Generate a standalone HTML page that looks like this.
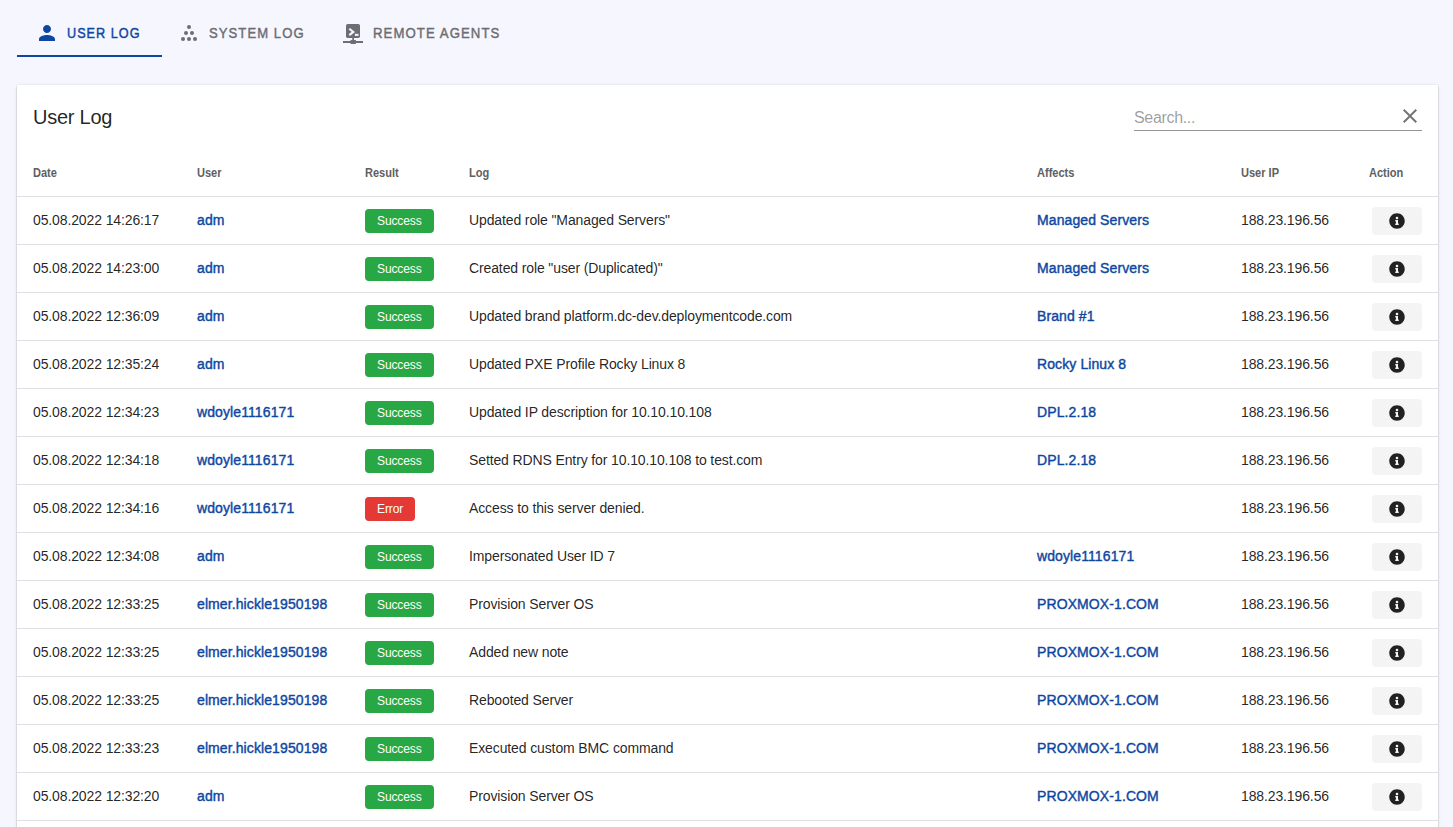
<!DOCTYPE html>
<html><head><meta charset="utf-8"><title>User Log</title>
<style>
html,body{margin:0;padding:0;}
body{width:1453px;height:827px;overflow:hidden;background:#f6f7fe;font-family:"Liberation Sans",sans-serif;color:rgba(0,0,0,0.87);position:relative;}
.tab{position:absolute;top:0;height:57px;}
.tab .t{position:absolute;top:24px;font-size:15px;font-weight:normal;-webkit-text-stroke:0.45px currentColor;letter-spacing:1.2px;line-height:17px;white-space:nowrap;transform-origin:0 0;}
.tab svg{position:absolute;}
.t1 .t{color:#0d47a1;}
.t2 .t,.t3 .t{color:#6d6d72;}
.ind{position:absolute;left:17px;top:55px;width:145px;height:2px;background:#0d47a1;}
.card{position:absolute;left:17px;top:85px;width:1421px;height:800px;background:#fff;
box-shadow:0 2px 2px rgba(0,0,0,0.2),0 0 1px rgba(0,0,0,0.2),0 1px 5px rgba(0,0,0,0.05);}
.title{position:absolute;left:16px;top:20px;font-size:20px;letter-spacing:-0.25px;line-height:24px;white-space:nowrap;}
.search{position:absolute;left:1117px;top:13px;width:288px;height:32px;border-bottom:1px solid rgba(0,0,0,0.42);}
.search .ph{position:absolute;left:0;top:10px;font-size:16px;letter-spacing:-0.33px;line-height:19px;color:rgba(0,0,0,0.40);}
.search svg{position:absolute;left:264px;top:6px;}
.hdr{position:absolute;left:0;top:64px;width:1421px;height:47px;border-bottom:1px solid #e0e0e0;}
.hdr span{position:absolute;top:17px;transform-origin:0 0;transform:scaleX(0.92);font-size:12px;font-weight:bold;line-height:14px;color:#606060;white-space:nowrap;}
.row{position:absolute;left:0;width:1421px;height:47px;border-bottom:1px solid #e0e0e0;}
.c{position:absolute;top:15px;font-size:14px;letter-spacing:-0.12px;line-height:16px;white-space:nowrap;}
.lk{color:#0d47a1;-webkit-text-stroke:0.4px currentColor;letter-spacing:0.1px;}
.date{left:16px;} .user{left:180px;} .res{left:348px;top:12px;} .log{left:452px;} .aff{left:1020px;} .ip{left:1224px;}
.badge{display:inline-block;height:24px;line-height:24px;font-size:12px;color:#fff;border-radius:4px;padding:0 12px;}
.ok{background:#28a745;} .err{background:#e53935;}
.act{position:absolute;left:1355px;top:10px;width:50px;height:28px;background:#f4f4f4;border-radius:4px;}
.act svg{position:absolute;left:17px;top:6px;}
</style></head><body>
<div class="tab t1">
<svg style="left:35px;top:21px" width="24" height="24" viewBox="0 0 24 24"><path fill="#0d47a1" d="M12 12c2.21 0 4-1.79 4-4s-1.79-4-4-4-4 1.79-4 4 1.79 4 4 4zm0 2c-2.67 0-8 1.34-8 4v2h16v-2c0-2.66-5.33-4-8-4z"/></svg>
<span class="t" style="left:67px;transform:scaleX(0.844)">USER LOG</span>
</div>
<div class="ind"></div>
<div class="tab t2">
<svg style="left:175px;top:20px" width="24" height="24" viewBox="0 0 24 24" fill="#6d6d72">
<circle cx="14" cy="7" r="2"/><circle cx="11" cy="13" r="2"/><circle cx="17" cy="13" r="2"/><circle cx="8" cy="19" r="2"/><circle cx="14" cy="19" r="2"/><circle cx="20" cy="19" r="2"/></svg>
<span class="t" style="left:209px;transform:scaleX(0.873)">SYSTEM LOG</span>
</div>
<div class="tab t3">
<svg style="left:340px;top:20px" width="26" height="26" viewBox="0 0 26 26">
<g fill="#6d6d72">
<rect x="6" y="4" width="14" height="14" rx="1.8"/>
<rect x="12.3" y="17.5" width="1.7" height="3"/>
<rect x="3" y="21" width="20" height="2"/>
<rect x="10.2" y="20" width="6" height="4" rx="1.2"/>
</g>
<path d="M9.3 8.7 L13.3 11.9 L9.3 15.1" fill="none" stroke="#f6f7fe" stroke-width="2.1" stroke-linejoin="miter"/>
<rect x="14.9" y="13.8" width="3.6" height="2.1" fill="#f6f7fe"/>
</svg>
<span class="t" style="left:373px;transform:scaleX(0.88)">REMOTE AGENTS</span>
</div>
<div class="card">
<div class="title">User Log</div>
<div class="search"><span class="ph">Search...</span>
<svg width="24" height="24" viewBox="0 0 24 24"><path fill="rgba(0,0,0,0.54)" d="M19 6.41 17.59 5 12 10.59 6.41 5 5 6.41 10.59 12 5 17.59 6.41 19 12 13.41 17.59 19 19 17.59 13.41 12z"/></svg>
</div>
<div class="hdr"><span style="left:16px">Date</span><span style="left:180px">User</span><span style="left:348px">Result</span><span style="left:452px">Log</span><span style="left:1020px">Affects</span><span style="left:1224px">User IP</span><span style="left:1352px">Action</span></div>
<div class="row" style="top:112px">
<span class="c date">05.08.2022 14:26:17</span><span class="c user lk">adm</span><span class="c res"><span class="badge ok">Success</span></span><span class="c log">Updated role &quot;Managed Servers&quot;</span><span class="c aff lk">Managed Servers</span><span class="c ip">188.23.196.56</span><span class="act"><svg class="ic" viewBox="0 0 512 512" width="16" height="16"><path fill="#212121" d="M256 8C119.043 8 8 119.083 8 256c0 136.997 111.043 248 248 248s248-111.003 248-248C504 119.083 392.957 8 256 8zm0 110c23.196 0 42 18.804 42 42s-18.804 42-42 42-42-18.804-42-42 18.804-42 42-42zm56 254c0 6.627-5.373 12-12 12h-88c-6.627 0-12-5.373-12-12v-24c0-6.627 5.373-12 12-12h12v-64h-12c-6.627 0-12-5.373-12-12v-24c0-6.627 5.373-12 12-12h64c6.627 0 12 5.373 12 12v100h12c6.627 0 12 5.373 12 12v24z"/></svg></span>
</div>
<div class="row" style="top:160px">
<span class="c date">05.08.2022 14:23:00</span><span class="c user lk">adm</span><span class="c res"><span class="badge ok">Success</span></span><span class="c log">Created role &quot;user (Duplicated)&quot;</span><span class="c aff lk">Managed Servers</span><span class="c ip">188.23.196.56</span><span class="act"><svg class="ic" viewBox="0 0 512 512" width="16" height="16"><path fill="#212121" d="M256 8C119.043 8 8 119.083 8 256c0 136.997 111.043 248 248 248s248-111.003 248-248C504 119.083 392.957 8 256 8zm0 110c23.196 0 42 18.804 42 42s-18.804 42-42 42-42-18.804-42-42 18.804-42 42-42zm56 254c0 6.627-5.373 12-12 12h-88c-6.627 0-12-5.373-12-12v-24c0-6.627 5.373-12 12-12h12v-64h-12c-6.627 0-12-5.373-12-12v-24c0-6.627 5.373-12 12-12h64c6.627 0 12 5.373 12 12v100h12c6.627 0 12 5.373 12 12v24z"/></svg></span>
</div>
<div class="row" style="top:208px">
<span class="c date">05.08.2022 12:36:09</span><span class="c user lk">adm</span><span class="c res"><span class="badge ok">Success</span></span><span class="c log">Updated brand platform.dc-dev.deploymentcode.com</span><span class="c aff lk">Brand #1</span><span class="c ip">188.23.196.56</span><span class="act"><svg class="ic" viewBox="0 0 512 512" width="16" height="16"><path fill="#212121" d="M256 8C119.043 8 8 119.083 8 256c0 136.997 111.043 248 248 248s248-111.003 248-248C504 119.083 392.957 8 256 8zm0 110c23.196 0 42 18.804 42 42s-18.804 42-42 42-42-18.804-42-42 18.804-42 42-42zm56 254c0 6.627-5.373 12-12 12h-88c-6.627 0-12-5.373-12-12v-24c0-6.627 5.373-12 12-12h12v-64h-12c-6.627 0-12-5.373-12-12v-24c0-6.627 5.373-12 12-12h64c6.627 0 12 5.373 12 12v100h12c6.627 0 12 5.373 12 12v24z"/></svg></span>
</div>
<div class="row" style="top:256px">
<span class="c date">05.08.2022 12:35:24</span><span class="c user lk">adm</span><span class="c res"><span class="badge ok">Success</span></span><span class="c log">Updated PXE Profile Rocky Linux 8</span><span class="c aff lk">Rocky Linux 8</span><span class="c ip">188.23.196.56</span><span class="act"><svg class="ic" viewBox="0 0 512 512" width="16" height="16"><path fill="#212121" d="M256 8C119.043 8 8 119.083 8 256c0 136.997 111.043 248 248 248s248-111.003 248-248C504 119.083 392.957 8 256 8zm0 110c23.196 0 42 18.804 42 42s-18.804 42-42 42-42-18.804-42-42 18.804-42 42-42zm56 254c0 6.627-5.373 12-12 12h-88c-6.627 0-12-5.373-12-12v-24c0-6.627 5.373-12 12-12h12v-64h-12c-6.627 0-12-5.373-12-12v-24c0-6.627 5.373-12 12-12h64c6.627 0 12 5.373 12 12v100h12c6.627 0 12 5.373 12 12v24z"/></svg></span>
</div>
<div class="row" style="top:304px">
<span class="c date">05.08.2022 12:34:23</span><span class="c user lk">wdoyle1116171</span><span class="c res"><span class="badge ok">Success</span></span><span class="c log">Updated IP description for 10.10.10.108</span><span class="c aff lk">DPL.2.18</span><span class="c ip">188.23.196.56</span><span class="act"><svg class="ic" viewBox="0 0 512 512" width="16" height="16"><path fill="#212121" d="M256 8C119.043 8 8 119.083 8 256c0 136.997 111.043 248 248 248s248-111.003 248-248C504 119.083 392.957 8 256 8zm0 110c23.196 0 42 18.804 42 42s-18.804 42-42 42-42-18.804-42-42 18.804-42 42-42zm56 254c0 6.627-5.373 12-12 12h-88c-6.627 0-12-5.373-12-12v-24c0-6.627 5.373-12 12-12h12v-64h-12c-6.627 0-12-5.373-12-12v-24c0-6.627 5.373-12 12-12h64c6.627 0 12 5.373 12 12v100h12c6.627 0 12 5.373 12 12v24z"/></svg></span>
</div>
<div class="row" style="top:352px">
<span class="c date">05.08.2022 12:34:18</span><span class="c user lk">wdoyle1116171</span><span class="c res"><span class="badge ok">Success</span></span><span class="c log">Setted RDNS Entry for 10.10.10.108 to test.com</span><span class="c aff lk">DPL.2.18</span><span class="c ip">188.23.196.56</span><span class="act"><svg class="ic" viewBox="0 0 512 512" width="16" height="16"><path fill="#212121" d="M256 8C119.043 8 8 119.083 8 256c0 136.997 111.043 248 248 248s248-111.003 248-248C504 119.083 392.957 8 256 8zm0 110c23.196 0 42 18.804 42 42s-18.804 42-42 42-42-18.804-42-42 18.804-42 42-42zm56 254c0 6.627-5.373 12-12 12h-88c-6.627 0-12-5.373-12-12v-24c0-6.627 5.373-12 12-12h12v-64h-12c-6.627 0-12-5.373-12-12v-24c0-6.627 5.373-12 12-12h64c6.627 0 12 5.373 12 12v100h12c6.627 0 12 5.373 12 12v24z"/></svg></span>
</div>
<div class="row" style="top:400px">
<span class="c date">05.08.2022 12:34:16</span><span class="c user lk">wdoyle1116171</span><span class="c res"><span class="badge err">Error</span></span><span class="c log">Access to this server denied.</span><span class="c aff lk"></span><span class="c ip">188.23.196.56</span><span class="act"><svg class="ic" viewBox="0 0 512 512" width="16" height="16"><path fill="#212121" d="M256 8C119.043 8 8 119.083 8 256c0 136.997 111.043 248 248 248s248-111.003 248-248C504 119.083 392.957 8 256 8zm0 110c23.196 0 42 18.804 42 42s-18.804 42-42 42-42-18.804-42-42 18.804-42 42-42zm56 254c0 6.627-5.373 12-12 12h-88c-6.627 0-12-5.373-12-12v-24c0-6.627 5.373-12 12-12h12v-64h-12c-6.627 0-12-5.373-12-12v-24c0-6.627 5.373-12 12-12h64c6.627 0 12 5.373 12 12v100h12c6.627 0 12 5.373 12 12v24z"/></svg></span>
</div>
<div class="row" style="top:448px">
<span class="c date">05.08.2022 12:34:08</span><span class="c user lk">adm</span><span class="c res"><span class="badge ok">Success</span></span><span class="c log">Impersonated User ID 7</span><span class="c aff lk">wdoyle1116171</span><span class="c ip">188.23.196.56</span><span class="act"><svg class="ic" viewBox="0 0 512 512" width="16" height="16"><path fill="#212121" d="M256 8C119.043 8 8 119.083 8 256c0 136.997 111.043 248 248 248s248-111.003 248-248C504 119.083 392.957 8 256 8zm0 110c23.196 0 42 18.804 42 42s-18.804 42-42 42-42-18.804-42-42 18.804-42 42-42zm56 254c0 6.627-5.373 12-12 12h-88c-6.627 0-12-5.373-12-12v-24c0-6.627 5.373-12 12-12h12v-64h-12c-6.627 0-12-5.373-12-12v-24c0-6.627 5.373-12 12-12h64c6.627 0 12 5.373 12 12v100h12c6.627 0 12 5.373 12 12v24z"/></svg></span>
</div>
<div class="row" style="top:496px">
<span class="c date">05.08.2022 12:33:25</span><span class="c user lk">elmer.hickle1950198</span><span class="c res"><span class="badge ok">Success</span></span><span class="c log">Provision Server OS</span><span class="c aff lk">PROXMOX-1.COM</span><span class="c ip">188.23.196.56</span><span class="act"><svg class="ic" viewBox="0 0 512 512" width="16" height="16"><path fill="#212121" d="M256 8C119.043 8 8 119.083 8 256c0 136.997 111.043 248 248 248s248-111.003 248-248C504 119.083 392.957 8 256 8zm0 110c23.196 0 42 18.804 42 42s-18.804 42-42 42-42-18.804-42-42 18.804-42 42-42zm56 254c0 6.627-5.373 12-12 12h-88c-6.627 0-12-5.373-12-12v-24c0-6.627 5.373-12 12-12h12v-64h-12c-6.627 0-12-5.373-12-12v-24c0-6.627 5.373-12 12-12h64c6.627 0 12 5.373 12 12v100h12c6.627 0 12 5.373 12 12v24z"/></svg></span>
</div>
<div class="row" style="top:544px">
<span class="c date">05.08.2022 12:33:25</span><span class="c user lk">elmer.hickle1950198</span><span class="c res"><span class="badge ok">Success</span></span><span class="c log">Added new note</span><span class="c aff lk">PROXMOX-1.COM</span><span class="c ip">188.23.196.56</span><span class="act"><svg class="ic" viewBox="0 0 512 512" width="16" height="16"><path fill="#212121" d="M256 8C119.043 8 8 119.083 8 256c0 136.997 111.043 248 248 248s248-111.003 248-248C504 119.083 392.957 8 256 8zm0 110c23.196 0 42 18.804 42 42s-18.804 42-42 42-42-18.804-42-42 18.804-42 42-42zm56 254c0 6.627-5.373 12-12 12h-88c-6.627 0-12-5.373-12-12v-24c0-6.627 5.373-12 12-12h12v-64h-12c-6.627 0-12-5.373-12-12v-24c0-6.627 5.373-12 12-12h64c6.627 0 12 5.373 12 12v100h12c6.627 0 12 5.373 12 12v24z"/></svg></span>
</div>
<div class="row" style="top:592px">
<span class="c date">05.08.2022 12:33:25</span><span class="c user lk">elmer.hickle1950198</span><span class="c res"><span class="badge ok">Success</span></span><span class="c log">Rebooted Server</span><span class="c aff lk">PROXMOX-1.COM</span><span class="c ip">188.23.196.56</span><span class="act"><svg class="ic" viewBox="0 0 512 512" width="16" height="16"><path fill="#212121" d="M256 8C119.043 8 8 119.083 8 256c0 136.997 111.043 248 248 248s248-111.003 248-248C504 119.083 392.957 8 256 8zm0 110c23.196 0 42 18.804 42 42s-18.804 42-42 42-42-18.804-42-42 18.804-42 42-42zm56 254c0 6.627-5.373 12-12 12h-88c-6.627 0-12-5.373-12-12v-24c0-6.627 5.373-12 12-12h12v-64h-12c-6.627 0-12-5.373-12-12v-24c0-6.627 5.373-12 12-12h64c6.627 0 12 5.373 12 12v100h12c6.627 0 12 5.373 12 12v24z"/></svg></span>
</div>
<div class="row" style="top:640px">
<span class="c date">05.08.2022 12:33:23</span><span class="c user lk">elmer.hickle1950198</span><span class="c res"><span class="badge ok">Success</span></span><span class="c log">Executed custom BMC command</span><span class="c aff lk">PROXMOX-1.COM</span><span class="c ip">188.23.196.56</span><span class="act"><svg class="ic" viewBox="0 0 512 512" width="16" height="16"><path fill="#212121" d="M256 8C119.043 8 8 119.083 8 256c0 136.997 111.043 248 248 248s248-111.003 248-248C504 119.083 392.957 8 256 8zm0 110c23.196 0 42 18.804 42 42s-18.804 42-42 42-42-18.804-42-42 18.804-42 42-42zm56 254c0 6.627-5.373 12-12 12h-88c-6.627 0-12-5.373-12-12v-24c0-6.627 5.373-12 12-12h12v-64h-12c-6.627 0-12-5.373-12-12v-24c0-6.627 5.373-12 12-12h64c6.627 0 12 5.373 12 12v100h12c6.627 0 12 5.373 12 12v24z"/></svg></span>
</div>
<div class="row" style="top:688px">
<span class="c date">05.08.2022 12:32:20</span><span class="c user lk">adm</span><span class="c res"><span class="badge ok">Success</span></span><span class="c log">Provision Server OS</span><span class="c aff lk">PROXMOX-1.COM</span><span class="c ip">188.23.196.56</span><span class="act"><svg class="ic" viewBox="0 0 512 512" width="16" height="16"><path fill="#212121" d="M256 8C119.043 8 8 119.083 8 256c0 136.997 111.043 248 248 248s248-111.003 248-248C504 119.083 392.957 8 256 8zm0 110c23.196 0 42 18.804 42 42s-18.804 42-42 42-42-18.804-42-42 18.804-42 42-42zm56 254c0 6.627-5.373 12-12 12h-88c-6.627 0-12-5.373-12-12v-24c0-6.627 5.373-12 12-12h12v-64h-12c-6.627 0-12-5.373-12-12v-24c0-6.627 5.373-12 12-12h64c6.627 0 12 5.373 12 12v100h12c6.627 0 12 5.373 12 12v24z"/></svg></span>
</div>
<div class="row" style="top:736px;border-bottom:none"></div>
</div>
</body></html>
